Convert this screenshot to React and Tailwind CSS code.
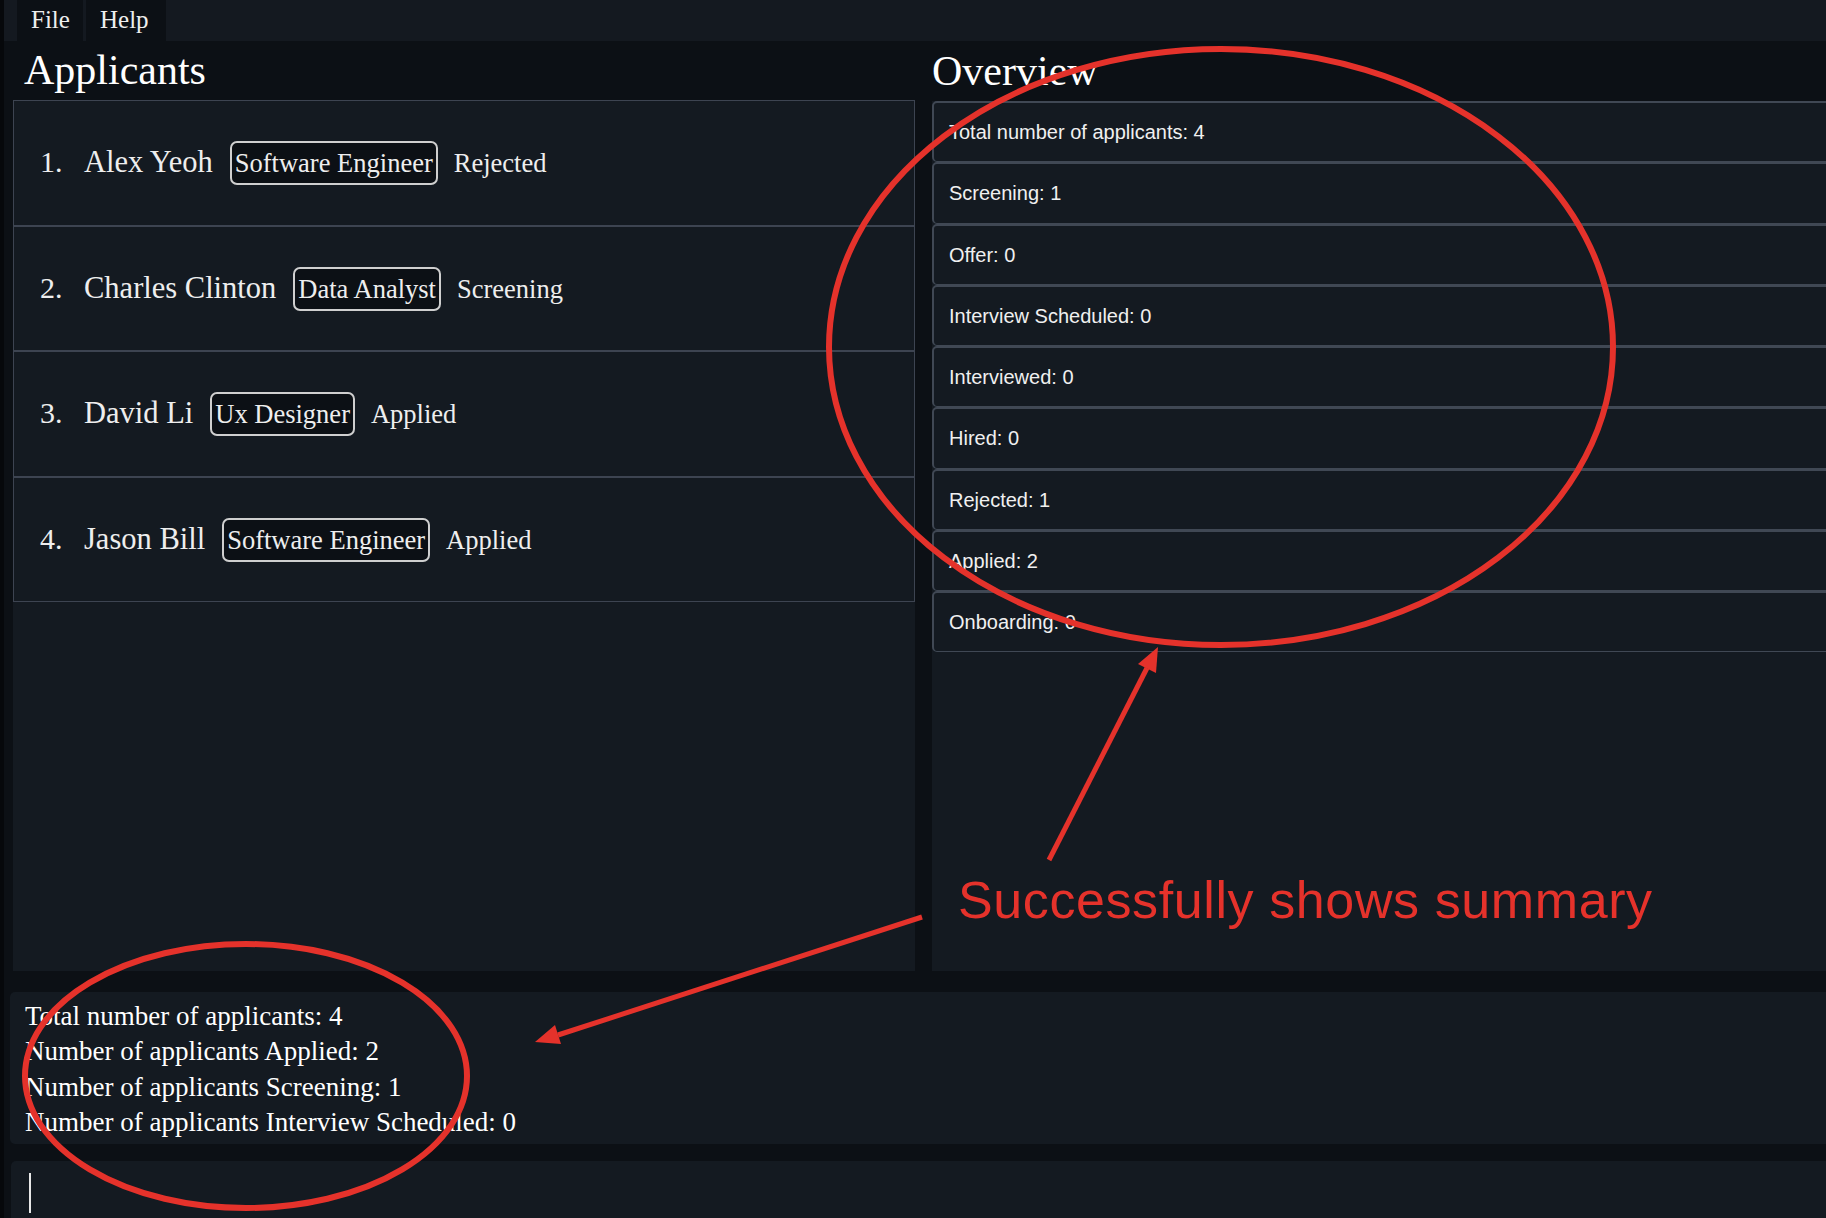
import React from "react";

const applicants = [
  { n: "1.", name: "Alex Yeoh", role: "Software Engineer", status: "Rejected" },
  { n: "2.", name: "Charles Clinton", role: "Data Analyst", status: "Screening" },
  { n: "3.", name: "David Li", role: "Ux Designer", status: "Applied" },
  { n: "4.", name: "Jason Bill", role: "Software Engineer", status: "Applied" },
];

const overview = [
  "Total number of applicants: 4",
  "Screening: 1",
  "Offer: 0",
  "Interview Scheduled: 0",
  "Interviewed: 0",
  "Hired: 0",
  "Rejected: 1",
  "Applied: 2",
  "Onboarding: 0",
];

const results = [
  "Total number of applicants: 4",
  "Number of applicants Applied: 2",
  "Number of applicants Screening: 1",
  "Number of applicants Interview Scheduled: 0",
];

export default function App() {
  return (
    <div className="relative w-[1826px] h-[1218px] overflow-hidden bg-[#0c1015] border-l-4 border-[#06080b] font-['Liberation_Serif',serif] text-[#eeeeee]">
      {/* Menu bar */}
      <div className="flex h-[41px] bg-[#141920] pl-[13px] gap-[3px]">
        <div className="w-[66px] bg-[#0c1015] text-[25px] leading-[39px] pl-[14px]">File</div>
        <div className="w-[80px] bg-[#0c1015] text-[25px] leading-[39px] pl-[14px]">Help</div>
      </div>

      {/* Main area */}
      <div className="flex h-[930px]">
        {/* Left column */}
        <div className="flex flex-col w-[911px] flex-none pl-[9px]">
          <div className="h-[59px] leading-[59px] text-[42px] pl-[11px] text-white">Applicants</div>
          <div className="flex-1 bg-[#141a21] flex flex-col">
            {applicants.map((a) => (
              <div
                key={a.n}
                className="h-[125.5px] flex-none flex items-center border border-[#3d4451] pl-[26px]"
              >
                <div className="flex items-baseline">
                  <span className="w-[44px] text-[30px]">{a.n}</span>
                  <span className="text-[30.5px]">{a.name}</span>
                  <span className="ml-[17px] text-[26.5px] leading-[30px] px-[3px] py-[5px] border-2 border-[#cfcfcf] rounded-[7px] bg-[#0c1015]">
                    {a.role}
                  </span>
                  <span className="ml-[16px] text-[26.5px]">{a.status}</span>
                </div>
              </div>
            ))}
          </div>
        </div>

        <div className="w-[17px] flex-none" />

        {/* Right column */}
        <div className="flex flex-col w-[920px] flex-none">
          <div className="h-[60px] leading-[60px] text-[42px] text-white">Overview</div>
          <div className="flex-1 bg-[#141a21] flex flex-col">
            {overview.map((o) => (
              <div
                key={o}
                className="h-[61.25px] flex-none flex items-center border-t-2 border-x-2 border-b border-[#404854] rounded-[5px] pl-[15px] font-['Liberation_Sans',sans-serif] text-[20px] text-[#f0f0f0]"
              >
                {o}
              </div>
            ))}
          </div>
        </div>
      </div>

      <div className="h-[21px]" />

      {/* Result display */}
      <div className="ml-[6px] h-[152px] bg-[#141a21] rounded-tl-[5px] rounded-bl-[5px] pl-[15px] pt-[7px]">
        {results.map((r) => (
          <div key={r} className="text-[27px] leading-[35.3px] text-white">
            {r}
          </div>
        ))}
      </div>

      <div className="h-[17px]" />

      {/* Command box */}
      <div className="ml-[7px] h-[57px] bg-[#141a21] rounded-tl-[5px] pl-[18px] pt-[12px]">
        <div className="w-[2px] h-[40px] bg-[#e8e8e8]" />
      </div>

      {/* Annotation overlay */}
      <svg
        className="absolute left-0 top-0 pointer-events-none"
        width="1826"
        height="1218"
        viewBox="0 0 1826 1218"
      >
        <ellipse cx="1217" cy="347" rx="392" ry="298" fill="none" stroke="#e5322b" strokeWidth="6" />
        <ellipse cx="242" cy="1076" rx="221" ry="132" fill="none" stroke="#e5322b" strokeWidth="6" />
        <line x1="1045" y1="860" x2="1143" y2="668" stroke="#e5322b" strokeWidth="5" />
        <polygon points="1154,647 1152,673 1134,664" fill="#e5322b" />
        <line x1="918" y1="917" x2="554" y2="1035" stroke="#e5322b" strokeWidth="5" />
        <polygon points="531,1042 557,1044 551,1025" fill="#e5322b" />
      </svg>
      <div className="absolute left-[954px] top-[874px] text-[52px] leading-[52px] tracking-[0.6px] font-['Liberation_Sans',sans-serif] text-[#e5322b] whitespace-nowrap">
        Successfully shows summary
      </div>
    </div>
  );
}
